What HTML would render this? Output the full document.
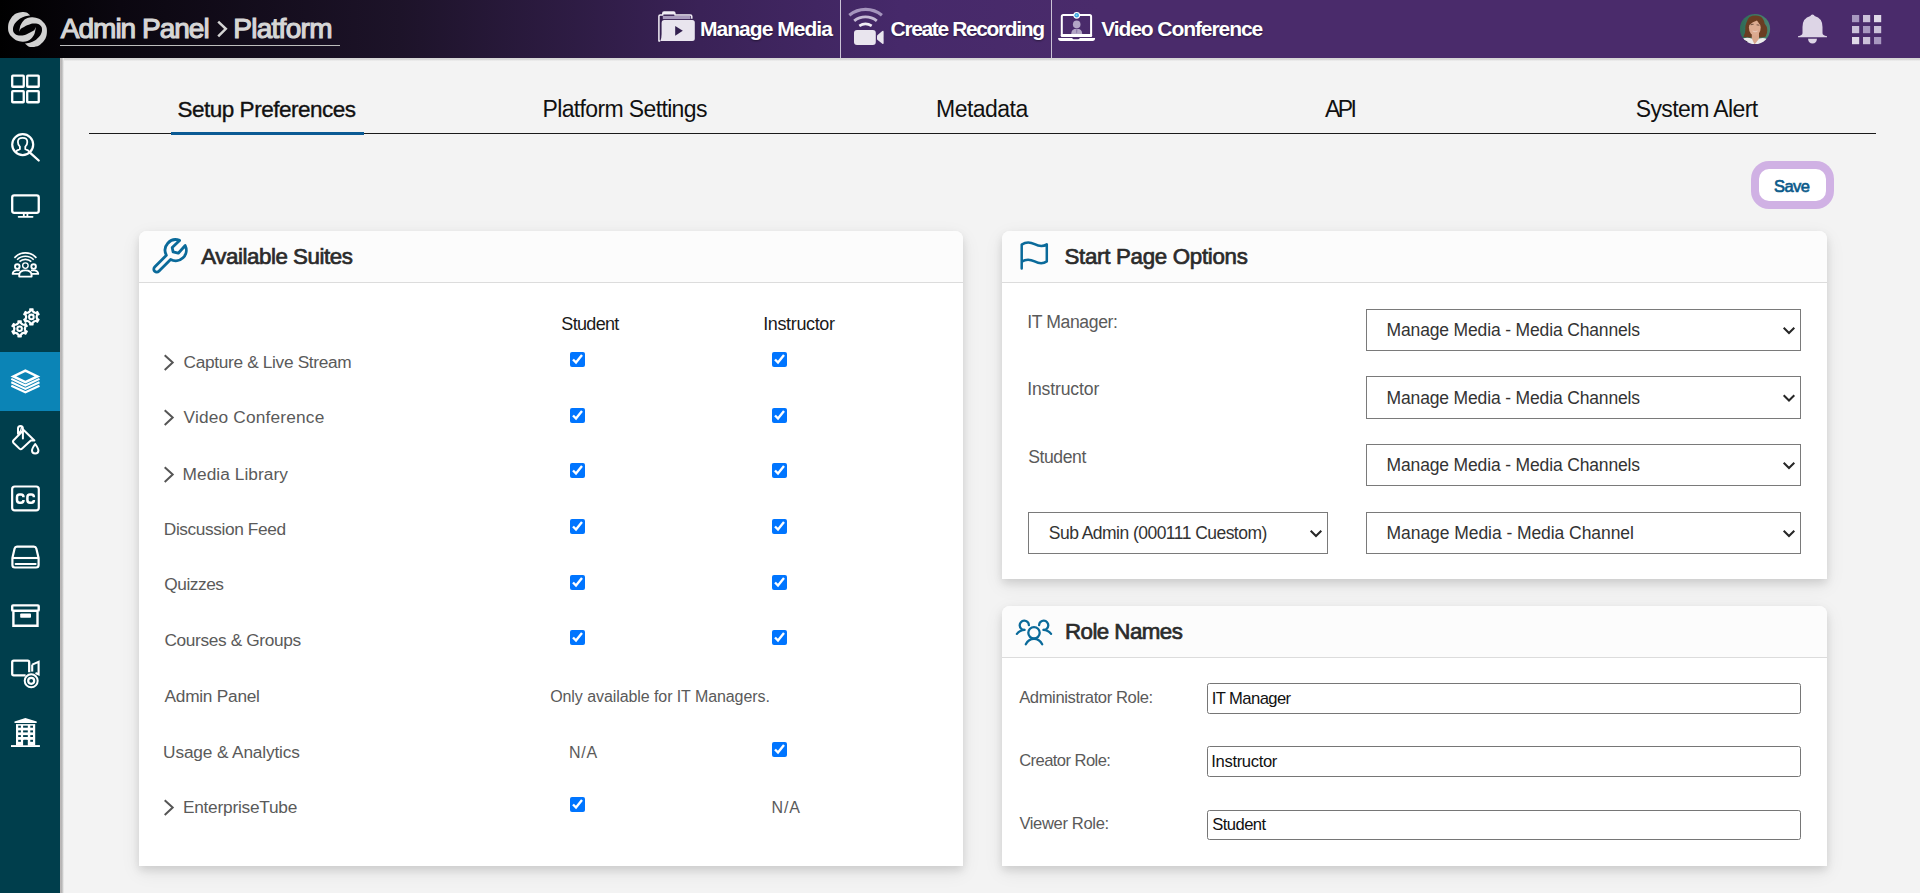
<!DOCTYPE html>
<html lang="en">
<head>
<meta charset="utf-8">
<title>Admin Panel - Platform</title>
<style>
*{box-sizing:border-box;}
html,body{margin:0;padding:0;}
body{width:1920px;height:893px;overflow:hidden;position:relative;background:#f3f3f3;font-family:"Liberation Sans",sans-serif;color:#222;}
.abs{position:absolute;}
.t{position:absolute;white-space:nowrap;line-height:1;}
/* ---------- header ---------- */
#hdr{position:absolute;left:0;top:0;width:1920px;height:58px;background:linear-gradient(90deg,#000 0px,#0b0710 120px,#1d1329 400px,#3a2257 700px,#46296a 900px,#4a2b6b 1100px,#4a2b6b 1920px);}
#hdrshadow{position:absolute;left:60px;top:58px;width:1860px;height:3px;background:linear-gradient(180deg,#d5d5d5 0,#d9d9d9 55%,#f3f3f3 100%);}
#title{left:60px;top:14px;font-size:29.5px;color:#dcdcdc;letter-spacing:-1.7px;-webkit-text-stroke:.5px #dcdcdc;}
#titleline{left:60px;top:45px;width:280px;height:1px;background:#bdbdbd;}
.nav{color:#fff;font-weight:700;font-size:20.4px;letter-spacing:-.6px;text-shadow:0 1px 2px rgba(0,0,0,.45);}
.sep{position:absolute;top:0;width:1px;height:58px;background:#cbc3d6;}
/* ---------- sidebar ---------- */
#side{position:absolute;left:0;top:58px;width:60px;height:835px;background:#003e4c;}
#sideshadow{position:absolute;left:60px;top:58px;width:4px;height:835px;background:linear-gradient(90deg,#bdb9b9 0,#b6b6b6 45%,#f3f3f3 100%);}
#active{position:absolute;left:0;top:352px;width:60px;height:59px;background:#0b84b6;}
.ico{position:absolute;overflow:visible;}
/* ---------- tabs ---------- */
.tab{font-size:23px;color:#111;letter-spacing:-.73px;}
#tabline{left:89px;top:133px;width:1787px;height:1px;background:#1a1a1a;}
#tabactive{left:171px;top:132px;width:193px;height:3px;background:#0a5a94;}
/* ---------- panels ---------- */
.panel{position:absolute;background:#fff;border-radius:8px 8px 0 0;box-shadow:0 4px 8px 0 rgba(0,0,0,.115),0 6px 20px 0 rgba(0,0,0,.075);}
.phead{position:absolute;left:0;top:0;right:0;height:52px;background:#fcfcfc;border-bottom:1px solid #dcdcdc;border-radius:8px 8px 0 0;}
.ptitle{font-size:23px;color:#2a2a2a;letter-spacing:-.7px;-webkit-text-stroke:.35px #2a2a2a;}
.lbl{font-size:17.5px;color:#555;letter-spacing:-.5px;}
.colh{font-size:18px;color:#1a1a1a;letter-spacing:-.6px;}
input[type=checkbox]{position:absolute;margin:0;width:15px;height:15px;}
.sel{position:absolute;border:1px solid #7a7a7a;background:#fff;}
.inp{position:absolute;border:1px solid #767676;border-radius:2.5px;background:#fff;}
</style>
</head>
<body>

<!-- HEADER -->
<div id="hdr"></div>
<div id="hdrshadow"></div>

<svg class="abs" style="left:0;top:0" width="1920" height="58" viewBox="0 0 1920 58">
  <!-- logo -->
  <g fill="#d2d2d2">
    <path d="M30.2 15.4C29.58 14.93 27.80 13.17 26.50 12.60C25.20 12.03 24.15 11.83 22.40 12.00C20.65 12.17 17.87 12.62 16.00 13.60C14.13 14.58 12.43 16.33 11.20 17.90C9.97 19.47 9.12 21.13 8.60 23.00C8.08 24.87 8.03 27.43 8.10 29.10C8.17 30.77 8.48 31.80 9.00 33.00C9.52 34.20 10.03 35.10 11.20 36.30C12.37 37.50 14.13 39.30 16.00 40.20C17.87 41.10 20.48 41.57 22.40 41.70C24.32 41.83 26.02 41.52 27.50 41.00C28.98 40.48 30.12 39.85 31.30 38.60C32.48 37.35 33.85 35.42 34.60 33.50C35.35 31.58 35.60 28.17 35.80 27.10C35.57 27.57 34.87 29.25 34.40 29.90C33.93 30.55 33.63 30.60 33.00 31.00C32.37 31.40 31.57 31.82 30.60 32.30C29.63 32.78 28.57 33.37 27.20 33.90C25.83 34.43 24.13 35.33 22.40 35.50C20.67 35.67 18.27 35.45 16.80 34.90C15.33 34.35 14.23 33.27 13.60 32.20C12.97 31.13 12.97 29.62 13.00 28.50C13.03 27.38 13.35 26.50 13.80 25.50C14.25 24.50 14.65 23.68 15.70 22.50C16.75 21.32 18.52 19.45 20.10 18.40C21.68 17.35 23.52 16.70 25.20 16.20C26.88 15.70 29.37 15.53 30.20 15.40Z"/>
    <path d="M30.2 15.4C29.58 14.93 27.80 13.17 26.50 12.60C25.20 12.03 24.15 11.83 22.40 12.00C20.65 12.17 17.87 12.62 16.00 13.60C14.13 14.58 12.43 16.33 11.20 17.90C9.97 19.47 9.12 21.13 8.60 23.00C8.08 24.87 8.03 27.43 8.10 29.10C8.17 30.77 8.48 31.80 9.00 33.00C9.52 34.20 10.03 35.10 11.20 36.30C12.37 37.50 14.13 39.30 16.00 40.20C17.87 41.10 20.48 41.57 22.40 41.70C24.32 41.83 26.02 41.52 27.50 41.00C28.98 40.48 30.12 39.85 31.30 38.60C32.48 37.35 33.85 35.42 34.60 33.50C35.35 31.58 35.60 28.17 35.80 27.10C35.57 27.57 34.87 29.25 34.40 29.90C33.93 30.55 33.63 30.60 33.00 31.00C32.37 31.40 31.57 31.82 30.60 32.30C29.63 32.78 28.57 33.37 27.20 33.90C25.83 34.43 24.13 35.33 22.40 35.50C20.67 35.67 18.27 35.45 16.80 34.90C15.33 34.35 14.23 33.27 13.60 32.20C12.97 31.13 12.97 29.62 13.00 28.50C13.03 27.38 13.35 26.50 13.80 25.50C14.25 24.50 14.65 23.68 15.70 22.50C16.75 21.32 18.52 19.45 20.10 18.40C21.68 17.35 23.52 16.70 25.20 16.20C26.88 15.70 29.37 15.53 30.20 15.40Z" transform="rotate(180 27.5 29.5)"/>
  </g>
  <!-- folder (Manage Media) -->
  <g>
    <path d="M660.2 41 L658.9 41 L658.9 16.2 Q658.9 14.9 660.2 14.9 L662.8 14.9 L662.8 13.4 Q662.8 12.1 664.1 12.1 L673.6 12.1 Q674.9 12.1 674.9 13.4 L674.9 14.9 L690.3 14.9 Q691.8 14.9 691.8 16.4 L691.8 18.8" fill="none" stroke="#f1eef5" stroke-width="1.5" stroke-linejoin="round"/>
    <rect x="662.8" y="12" width="12.1" height="2.6" rx="1" fill="#f1eef5"/>
    <rect x="662.8" y="15.9" width="27.6" height="3.2" fill="#a99bbd"/>
    <path d="M664.3 20.1 L692.3 20.1 Q694.8 20.1 694.8 22.6 L694.8 38.5 Q694.8 41 692.3 41 L660.4 41 Q661.6 38 661.6 34 L661.6 23 Q661.6 20.1 664.3 20.1Z" fill="#e9e5ee"/>
    <path d="M675.2 25.9 L675.2 35.7 L682.8 30.8Z" fill="#33204f"/>
  </g>
  <!-- camera (Create Recording) -->
  <g fill="none" stroke-linecap="butt">
    <path d="M849.3 15.2 A25.6 25.6 0 0 1 881.9 15.2" stroke="#a595bd" stroke-width="3.1"/>
    <path d="M854.2 20.8 A18.3 18.3 0 0 1 876.8 20.8" stroke="#c5bad5" stroke-width="2.9"/>
    <path d="M859.3 25.9 A11.3 11.3 0 0 1 871.7 25.9" stroke="#f0edf4" stroke-width="2.6"/>
  </g>
  <rect x="854" y="29.9" width="21.8" height="15.1" rx="3" fill="#e9e5ee"/>
  <path d="M877 36.2 Q877 35.4 877.6 34.9 L882.3 31.1 Q883.6 30.2 883.6 31.8 L883.6 43 Q883.6 44.6 882.3 43.7 L877.6 40 Q877 39.5 877 38.8Z" fill="#e9e5ee"/>
  <!-- laptop (Video Conference) -->
  <g>
    <path d="M1061.8 36 L1061.8 16.6 Q1061.8 15.1 1063.3 15.1 L1089.6 15.1 Q1091.1 15.1 1091.1 16.6 L1091.1 36" fill="none" stroke="#fff" stroke-width="2"/>
    <rect x="1060.8" y="34" width="31.3" height="3" rx="1" fill="#fff"/>
    <path d="M1058.1 38 L1072.2 38 Q1072.6 39.2 1074 39.2 L1078 39.2 Q1079.4 39.2 1079.7 38 L1095.1 38 Q1095.1 41 1092.5 41 L1060.7 41 Q1058.1 41 1058.1 38Z" fill="#fff"/>
    <circle cx="1076.7" cy="24.4" r="3.8" fill="#b3a6c6"/>
    <path d="M1071.2 34 Q1071.2 28.7 1076.7 28.7 Q1082.2 28.7 1082.2 34Z" fill="#b3a6c6"/>
    <path d="M1075.9 29.2 L1077.5 29.2 L1077.2 32.8 L1076.7 33.6 L1076.2 32.8Z" fill="#8e7dab"/>
    <circle cx="1076.7" cy="15.3" r="3.4" fill="#fff"/>
    <circle cx="1076.7" cy="15.3" r="2.3" fill="#3ba7e0"/>
    <circle cx="1076.5" cy="15.2" r=".9" fill="#8fd0f0"/>
  </g>
  <!-- avatar -->
  <defs><linearGradient id="avg" x1="0" x2="1" y1="0" y2="0"><stop offset="0" stop-color="#2d6955"/><stop offset="1" stop-color="#4d8571"/></linearGradient><filter id="avb" x="-10%" y="-10%" width="120%" height="120%"><feGaussianBlur stdDeviation=".7"/></filter><clipPath id="av"><circle cx="1755" cy="29" r="15.1"/></clipPath></defs>
  <g clip-path="url(#av)" filter="url(#avb)">
    <rect x="1738" y="12" width="34" height="34" fill="url(#avg)"/>
    <path d="M1749.5 17 Q1755 14.3 1760.5 16.6 Q1764 19 1764.6 23.5 Q1767.6 27 1767.3 30 Q1767.5 33.5 1765.5 36.8 L1761 37.5 L1749 37.5 L1743.3 37 Q1745.5 33 1745.3 30 Q1745 25.5 1746.5 22.5 Q1747.5 18.8 1749.5 17Z" fill="#6a3e22"/>
    <rect x="1751.8" y="32" width="7.2" height="13" fill="#d9a78c"/>
    <ellipse cx="1754.8" cy="27.6" rx="5.9" ry="8.1" fill="#dcab91"/>
    <path d="M1748.6 23.5 Q1749.6 18.2 1755 17.4 Q1761.4 18.2 1762.2 26 Q1758.6 24 1757 20.6 Q1753 21.6 1748.6 25.5Z" fill="#6a3e22"/>
    <path d="M1750.6 24.6 L1753.6 24.3 M1756.6 24.8 L1759.4 25.2" stroke="#7a5a4a" stroke-width="1.1" fill="none"/>
    <path d="M1752.6 31 Q1755 32.6 1757.6 31" stroke="#ecd3c8" stroke-width=".8" fill="none"/>
    <path d="M1742 46 L1743.2 38.3 Q1748 37 1751.8 38.6 L1754.6 44.4 L1759.2 38.6 Q1763 37.5 1766.4 38.7 L1768 46Z" fill="#ececec"/>
    <path d="M1743 39.5 L1747.5 41.5 L1746 44 L1742 43Z" fill="#2b2430"/>
  </g>
  <!-- bell -->
  <path d="M1812.5 14.4 Q1814.3 14.4 1814.6 16 Q1822.5 18 1822.5 27 L1822.5 33 Q1822.5 35.6 1827 36.2 L1827 37.3 L1798 37.3 L1798 36.2 Q1802.5 35.6 1802.5 33 L1802.5 27 Q1802.5 18 1810.4 16 Q1810.7 14.4 1812.5 14.4Z" fill="#ddd5e6"/>
  <path d="M1808 38.7 L1817 38.7 Q1816.5 43.4 1812.5 43.4 Q1808.5 43.4 1808 38.7Z" fill="#ddd5e6"/>
  <!-- app grid -->
  <g>
    <rect x="1852" y="15" width="7.2" height="7.2" fill="#a898c0"/><rect x="1863" y="15" width="7.2" height="7.2" fill="#cbc1d9"/><rect x="1874" y="15" width="7.2" height="7.2" fill="#e0dae8"/>
    <rect x="1852" y="26" width="7.2" height="7.2" fill="#cbc1d9"/><rect x="1863" y="26" width="7.2" height="7.2" fill="#a898c0"/><rect x="1874" y="26" width="7.2" height="7.2" fill="#cbc1d9"/>
    <rect x="1852" y="37" width="7.2" height="7.2" fill="#e0dae8"/><rect x="1863" y="37" width="7.2" height="7.2" fill="#cbc1d9"/><rect x="1874" y="37" width="7.2" height="7.2" fill="#a898c0"/>
  </g>
</svg>
<div id="titleline" class="abs"></div>

<div class="sep" style="left:840px"></div>
<div class="sep" style="left:1051px"></div>

<!-- SIDEBAR -->
<div id="side"></div>
<div id="sideshadow"></div>
<div id="active"></div>


<svg class="abs" style="left:0;top:58px" width="60" height="835" viewBox="0 58 60 835" fill="none" stroke="#fff" stroke-linejoin="round">
  <!-- 1 dashboard -->
  <g stroke-width="2.3" stroke-linejoin="miter">
    <rect x="12.2" y="75.65" width="11.55" height="11.1" rx=".6"/><rect x="27.2" y="75.65" width="11.55" height="11.1" rx=".6"/>
    <rect x="12.2" y="91.05" width="11.55" height="11.2" rx=".6"/><rect x="27.2" y="91.05" width="11.55" height="11.2" rx=".6"/>
  </g>
  <!-- 2 user search -->
  <circle cx="22.7" cy="144.6" r="10.5" stroke-width="2.2"/>
  <path d="M30.2 152.8 L38.7 160.5" stroke-width="2.3" stroke-linecap="round"/>
  <path d="M15.6 152.2 Q16.4 150.4 19.9 149.2 L19.9 146.6 Q17.9 145 17.9 142 Q17.7 137.8 22.6 137.8 Q27.5 137.8 27.3 142 Q27.3 145 25.3 146.6 L25.3 149.2 Q28.8 150.4 29.8 152.2" stroke-width="1.8"/>
  <!-- 3 monitor -->
  <rect x="12.2" y="195.45" width="26.55" height="17.4" rx="2" stroke-width="2.3"/>
  <path d="M23.8 214 L23.8 216.2 M27.4 214 L27.4 216.2" stroke-width="1.8"/>
  <path d="M18.6 216.8 L32.6 216.8" stroke-width="1.7" stroke-linecap="round"/>
  <!-- 4 group broadcast -->
  <g stroke-width="1.6" stroke-linecap="butt">
    <path d="M14.4 257.9 A14.6 14.6 0 0 1 36.4 257.9"/>
    <path d="M17.1 259.8 A11.6 11.6 0 0 1 33.7 259.8"/>
    <path d="M19.5 261.7 A8.6 8.6 0 0 1 31.3 261.7"/>
  </g>
  <g stroke-width="1.9">
    <circle cx="25.4" cy="265.6" r="2.75" stroke-width="1.4"/>
    <circle cx="17.3" cy="266.6" r="2.3"/>
    <circle cx="33.6" cy="266.6" r="2.3"/>
    <path d="M19.2 276.6 L19.2 275 Q19.6 270.4 25.4 270.4 Q31.2 270.4 31.6 275 L31.6 276.6Z"/>
    <path d="M19 273.9 L12.7 273.9 Q12.9 270.9 16.2 270.4 L19.8 270.4"/>
    <path d="M31.8 273.9 L38.2 273.9 Q38 270.9 34.7 270.4 L31 270.4"/>
  </g>
  <!-- 5 gears -->
  <g stroke="none"><g fill="#fff"><rect x="29.15" y="308.30" width="4.5" height="3" rx=".7" transform="rotate(0 31.4 316.9)"/><rect x="29.15" y="308.30" width="4.5" height="3" rx=".7" transform="rotate(60 31.4 316.9)"/><rect x="29.15" y="308.30" width="4.5" height="3" rx=".7" transform="rotate(120 31.4 316.9)"/><rect x="29.15" y="308.30" width="4.5" height="3" rx=".7" transform="rotate(180 31.4 316.9)"/><rect x="29.15" y="308.30" width="4.5" height="3" rx=".7" transform="rotate(240 31.4 316.9)"/><rect x="29.15" y="308.30" width="4.5" height="3" rx=".7" transform="rotate(300 31.4 316.9)"/><circle cx="31.4" cy="316.9" r="6.6"/></g><polygon points="31.40 311.30 33.42 313.39 36.25 314.10 35.45 316.90 36.25 319.70 33.42 320.41 31.40 322.50 29.38 320.41 26.55 319.70 27.35 316.90 26.55 314.10 29.37 313.39" fill="#003e4c"/><circle cx="31.4" cy="316.9" r="3.3" fill="#fff"/><circle cx="31.4" cy="316.9" r="1.25" fill="#003e4c"/><g fill="#fff"><rect x="17.35" y="320.20" width="4.5" height="3" rx=".7" transform="rotate(0 19.6 328.8)"/><rect x="17.35" y="320.20" width="4.5" height="3" rx=".7" transform="rotate(60 19.6 328.8)"/><rect x="17.35" y="320.20" width="4.5" height="3" rx=".7" transform="rotate(120 19.6 328.8)"/><rect x="17.35" y="320.20" width="4.5" height="3" rx=".7" transform="rotate(180 19.6 328.8)"/><rect x="17.35" y="320.20" width="4.5" height="3" rx=".7" transform="rotate(240 19.6 328.8)"/><rect x="17.35" y="320.20" width="4.5" height="3" rx=".7" transform="rotate(300 19.6 328.8)"/><circle cx="19.6" cy="328.8" r="6.6"/></g><polygon points="19.60 323.20 21.62 325.29 24.45 326.00 23.65 328.80 24.45 331.60 21.62 332.31 19.60 334.40 17.58 332.31 14.75 331.60 15.55 328.80 14.75 326.00 17.57 325.29" fill="#003e4c"/><circle cx="19.6" cy="328.8" r="3.3" fill="#fff"/><circle cx="19.6" cy="328.8" r="1.25" fill="#003e4c"/></g>
  <!-- 6 layers (active) -->
  <g stroke-linejoin="miter">
    <path d="M25.4 370.7 L37.4 376.4 L25.4 382.1 L13.4 376.4Z" stroke-width="2.5"/>
    <path d="M11.3 378.9 L25.4 385.5 L39.5 378.9" stroke-width="2.1"/>
    <path d="M11.3 382.3 L25.4 388.9 L39.5 382.3" stroke-width="2.1"/>
    <path d="M11.3 385.7 L25.4 392.3 L39.5 385.7" stroke-width="2.1"/>
  </g>
  <!-- 7 paint bucket -->
  <g stroke-width="2" stroke-linecap="round">
    <path d="M23.6 430 L13.6 440.2 Q12.3 441.6 13.6 443 L19.4 448.6 Q20.8 449.9 22.2 448.6 L30.8 440.5 L34.4 440.5 Z"/>
    <path d="M18 433.8 L18 428.6 Q18 426 20.5 426 Q22.9 426 22.9 428.6 L22.9 438.4"/>
    <path d="M21.4 427.4 Q21.3 430.3 19.2 432.8" stroke-width="1.4"/>
    <path d="M35.2 444 Q38.4 448.4 38.4 450.6 Q38.4 453.6 35.2 453.6 Q32 453.6 32 450.6 Q32 448.4 35.2 444Z"/>
  </g>
  <!-- 8 CC -->
  <rect x="12.15" y="486.5" width="26.65" height="23.8" rx="2.6" stroke-width="2.2"/>
  <g stroke-width="2.5" stroke-linecap="butt" stroke-linejoin="round">
    <path d="M23.5 497.2 Q23.5 494.5 21 494.5 L19.6 494.5 Q17 494.5 17 497.2 L17 500 Q17 502.7 19.6 502.7 L21 502.7 Q23.5 502.7 23.5 500"/>
    <path d="M33.9 497.2 Q33.9 494.5 31.4 494.5 L30 494.5 Q27.4 494.5 27.4 497.2 L27.4 500 Q27.4 502.7 30 502.7 L31.4 502.7 Q33.9 502.7 33.9 500"/>
  </g>
  <!-- 9 drive -->
  <g stroke-width="2.2">
    <path d="M17 546.6 L33.9 546.6 Q35.8 546.6 36.3 548.5 L38.6 558 L38.6 565 Q38.6 567.5 36.1 567.5 L14.9 567.5 Q12.4 567.5 12.4 565 L12.4 558 L14.6 548.5 Q15.1 546.6 17 546.6Z"/>
    <path d="M12.6 558 L38.4 558" stroke-width="2.1"/>
    <path d="M15.6 564 L35.6 564" stroke-width="2" stroke-linecap="round"/>
  </g>
  <!-- 10 archive -->
  <g stroke-width="2.4" stroke-linejoin="miter">
    <rect x="12.2" y="605.4" width="26.5" height="5.4" rx=".8"/>
    <path d="M13.4 612 L13.4 625.7 L37.5 625.7 L37.5 612"/>
  </g>
  <rect x="20.2" y="613.5" width="10.8" height="4.3" rx=".8" fill="#fff" stroke="none"/>
  <!-- 11 camera target -->
  <path d="M25.6 675.3 L13.7 675.3 Q12.2 675.3 12.2 673.8 L12.2 662.2 Q12.2 660.7 13.7 660.7 L27.7 660.7 Q29.2 660.7 29.2 662.2 L29.2 672.2" stroke-width="2.3"/>
  <path d="M32.2 664.6 L38.6 661.8 L38.6 674.4 L35.5 673" stroke-width="2.1" stroke-linejoin="miter"/>
  <path d="M32.2 664.6 L32.2 671.6" stroke-width="2.1"/>
  <circle cx="31.2" cy="680.8" r="6.5" stroke-width="2"/>
  <circle cx="31.2" cy="680.8" r="3" stroke-width="2.2"/>
  <!-- 12 building -->
  <g fill="#fff" stroke="none">
    <path d="M25.4 717.9 L36.7 721.5 L36.7 723.1 L14.5 723.1 L14.5 721.5Z"/>
    <rect x="16" y="724.1" width="19.2" height="21.4"/>
    <rect x="11" y="745.1" width="28.9" height="1.9"/>
  </g>
  <g fill="#003e4c" stroke="none">
    <rect x="18.2" y="725.7" width="2.7" height="2"/><rect x="23.1" y="725.7" width="4.7" height="2"/><rect x="30.3" y="725.7" width="2.7" height="2"/>
    <rect x="18.2" y="730.4" width="2.7" height="2"/><rect x="23.1" y="730.4" width="4.7" height="2"/><rect x="30.3" y="730.4" width="2.7" height="2"/>
    <rect x="18.2" y="735.1" width="2.7" height="1.9"/><rect x="23.1" y="735.1" width="4.7" height="1.9"/><rect x="30.3" y="735.1" width="2.7" height="1.9"/>
    <rect x="18.2" y="739.8" width="2.7" height="2"/><rect x="30.3" y="739.8" width="2.7" height="2"/>
    <path d="M23.1 745.3 L23.1 740.6 Q23.1 739.8 23.9 739.8 L27 739.8 Q27.8 739.8 27.8 740.6 L27.8 745.3Z"/>
  </g>
</svg>

<!-- TABS -->
<div id="tabline" class="abs"></div>
<div id="tabactive" class="abs"></div>


<!-- PANELS -->
<div class="panel" style="left:139px;top:231px;width:824px;height:635px;"><div class="phead"></div></div>
<div class="panel" style="left:1002px;top:231px;width:825px;height:348px;"><div class="phead"></div></div>
<div class="panel" style="left:1002px;top:606px;width:825px;height:260px;"><div class="phead"></div></div>

<!-- save button -->
<div class="abs" style="left:1751px;top:161px;width:83px;height:48px;border-radius:18px;background:#d0b1e4;"></div>
<div class="abs" style="left:1759px;top:169px;width:67px;height:32px;border-radius:10px;background:#fff;"></div>

<!-- panel icons -->
<svg class="abs" style="left:0;top:0" width="1920" height="893" viewBox="0 0 1920 893" fill="none" stroke="#0a6a9a" stroke-linecap="round" stroke-linejoin="round">
  <!-- wrench -->
  <path d="M179.6 240.4 A10.6 10.6 0 0 0 166.4 255.3 L154.66 267.06 A2.95 2.95 0 0 0 158.84 271.24 L170.6 259.5 A10.6 10.6 0 0 0 185.2 245.5 L178.3 253.2 L173.1 251.9 L172.2 247.6 Z" stroke-width="2.8"/>
  <!-- flag -->
  <path d="M1021.7 268.6 L1021.7 244.6 Q1027.6 240.6 1034.6 244.2 Q1041.6 247.8 1046.8 244.4 L1046.8 261.4 Q1041.6 265 1034.6 261.4 Q1027.6 257.8 1021.7 261.6" stroke-width="2.5"/>
  <!-- users -->
  <g stroke-width="2.3">
    <circle cx="1034" cy="632.8" r="5.7"/>
    <path d="M1025.8 644.2 Q1028.6 638.9 1034 638.9 Q1039.4 638.9 1042.2 644.2"/>
    <path d="M1028.9 625.2 A4.6 4.6 0 1 0 1024.6 629.9 Q1020 630 1016.9 633.9"/>
    <path d="M1039.1 625.2 A4.6 4.6 0 1 1 1043.4 629.9 Q1048 630 1051.1 633.9"/>
  </g>
</svg>
<svg class="abs" style="left:0;top:0" width="1920" height="893" viewBox="0 0 1920 893" fill="none" stroke="#555" stroke-width="2" stroke-linejoin="miter"><path d="M164.7 355.20 L172.7 362.60 L164.7 370.00"/><path d="M164.7 410.20 L172.7 417.60 L164.7 425.00"/><path d="M164.7 467.20 L172.7 474.60 L164.7 482.00"/><path d="M164.7 800.20 L172.7 807.60 L164.7 815.00"/></svg>
<svg class="abs" style="left:210px;top:15px" width="24" height="28" viewBox="210 15 24 28" fill="none" stroke="#d4d4d4" stroke-width="2.5"><path d="M218.2 21.6 L225.8 28.8 L218.2 36.4"/></svg>
<input type="checkbox" checked style="left:570px;top:352px"><input type="checkbox" checked style="left:772px;top:352px"><input type="checkbox" checked style="left:570px;top:408px"><input type="checkbox" checked style="left:772px;top:408px"><input type="checkbox" checked style="left:570px;top:463px"><input type="checkbox" checked style="left:772px;top:463px"><input type="checkbox" checked style="left:570px;top:519px"><input type="checkbox" checked style="left:772px;top:519px"><input type="checkbox" checked style="left:570px;top:575px"><input type="checkbox" checked style="left:772px;top:575px"><input type="checkbox" checked style="left:570px;top:630px"><input type="checkbox" checked style="left:772px;top:630px"><input type="checkbox" checked style="left:772px;top:742px"><input type="checkbox" checked style="left:570px;top:797px">
<!-- selects -->
<div class="sel" style="left:1366px;top:309px;width:435px;height:42px"></div>
<div class="sel" style="left:1366px;top:376px;width:435px;height:43px"></div>
<div class="sel" style="left:1366px;top:444px;width:435px;height:42px"></div>
<div class="sel" style="left:1028px;top:512px;width:300px;height:42px"></div>
<div class="sel" style="left:1366px;top:512px;width:435px;height:42px"></div>
<svg class="abs" style="left:0;top:0" width="1920" height="893" viewBox="0 0 1920 893" fill="none" stroke="#262626" stroke-width="2" stroke-linejoin="miter">
<path d="M1783.7 327.7 L1789 333 L1794.3 327.7"/>
<path d="M1783.7 395.2 L1789 400.5 L1794.3 395.2"/>
<path d="M1783.7 462.7 L1789 468 L1794.3 462.7"/>
<path d="M1783.7 530.7 L1789 536 L1794.3 530.7"/>
<path d="M1310.7 530.7 L1316 536 L1321.3 530.7"/>
</svg>
<!-- inputs -->
<div class="inp" style="left:1207px;top:683px;width:594px;height:31px"></div>
<div class="inp" style="left:1207px;top:746px;width:594px;height:31px"></div>
<div class="inp" style="left:1207px;top:810px;width:594px;height:30px"></div>

<!-- TEXT -->
<div class="t" style="left:60.80px;top:15px;font-size:28px;letter-spacing:-0.994px;color:#d6d6d6;-webkit-text-stroke:1.15px #d6d6d6;">Admin Panel</div>
<div class="t" style="left:233.20px;top:15px;font-size:28px;letter-spacing:-0.703px;color:#d6d6d6;-webkit-text-stroke:1.15px #d6d6d6;">Platform</div>
<div class="t" style="left:700.00px;top:18px;font-size:21px;letter-spacing:-0.969px;color:#fff;font-weight:700;text-shadow:0 1px 2px rgba(0,0,0,.45);">Manage Media</div>
<div class="t" style="left:890.60px;top:18px;font-size:21px;letter-spacing:-1.374px;color:#fff;font-weight:700;text-shadow:0 1px 2px rgba(0,0,0,.45);">Create Recording</div>
<div class="t" style="left:1101.20px;top:18px;font-size:21px;letter-spacing:-1.079px;color:#fff;font-weight:700;text-shadow:0 1px 2px rgba(0,0,0,.45);">Video Conference</div>
<div class="t" style="left:177.50px;top:99px;font-size:22.5px;letter-spacing:-0.488px;color:#111;-webkit-text-stroke:.35px #111;">Setup Preferences</div>
<div class="t" style="left:542.50px;top:98px;font-size:23px;letter-spacing:-0.639px;color:#111;">Platform Settings</div>
<div class="t" style="left:936.10px;top:98px;font-size:23px;letter-spacing:-0.544px;color:#111;">Metadata</div>
<div class="t" style="left:1324.90px;top:98px;font-size:23px;letter-spacing:-2.491px;color:#111;">API</div>
<div class="t" style="left:1635.70px;top:98px;font-size:23px;letter-spacing:-0.604px;color:#111;">System Alert</div>
<div class="t" style="left:1774.10px;top:178px;font-size:16.5px;letter-spacing:-0.611px;color:#0a5a8a;-webkit-text-stroke:.65px #0a5a8a;">Save</div>
<div class="t" style="left:201.30px;top:246px;font-size:22.3px;letter-spacing:-0.446px;color:#2b2b2b;-webkit-text-stroke:.7px #2b2b2b;">Available Suites</div>
<div class="t" style="left:1064.50px;top:246px;font-size:22.3px;letter-spacing:-0.297px;color:#2b2b2b;-webkit-text-stroke:.7px #2b2b2b;">Start Page Options</div>
<div class="t" style="left:1065.00px;top:621px;font-size:22.3px;letter-spacing:-0.536px;color:#2b2b2b;-webkit-text-stroke:.7px #2b2b2b;">Role Names</div>
<div class="t" style="left:561.30px;top:315px;font-size:18px;letter-spacing:-0.675px;color:#1a1a1a;">Student</div>
<div class="t" style="left:763.20px;top:315px;font-size:18px;letter-spacing:-0.359px;color:#1a1a1a;">Instructor</div>
<div class="t" style="left:183.50px;top:354px;font-size:17.3px;letter-spacing:-0.331px;color:#5a5a5a;">Capture &amp; Live Stream</div>
<div class="t" style="left:183.50px;top:409px;font-size:17.3px;letter-spacing:0.185px;color:#5a5a5a;">Video Conference</div>
<div class="t" style="left:182.60px;top:466px;font-size:17.3px;letter-spacing:0.054px;color:#5a5a5a;">Media Library</div>
<div class="t" style="left:163.80px;top:521px;font-size:17.3px;letter-spacing:-0.395px;color:#5a5a5a;">Discussion Feed</div>
<div class="t" style="left:164.30px;top:576px;font-size:17.3px;letter-spacing:-0.464px;color:#5a5a5a;">Quizzes</div>
<div class="t" style="left:164.50px;top:632px;font-size:17.3px;letter-spacing:-0.374px;color:#5a5a5a;">Courses &amp; Groups</div>
<div class="t" style="left:164.50px;top:688px;font-size:17.3px;letter-spacing:-0.254px;color:#5a5a5a;">Admin Panel</div>
<div class="t" style="left:163.10px;top:744px;font-size:17.3px;letter-spacing:-0.152px;color:#5a5a5a;">Usage &amp; Analytics</div>
<div class="t" style="left:182.90px;top:799px;font-size:17.3px;letter-spacing:-0.238px;color:#5a5a5a;">EnterpriseTube</div>
<div class="t" style="left:550.20px;top:689px;font-size:16px;letter-spacing:-0.079px;color:#5a5a5a;">Only available for IT Managers.</div>
<div class="t" style="left:568.90px;top:745px;font-size:16px;letter-spacing:0.850px;color:#5a5a5a;">N/A</div>
<div class="t" style="left:771.60px;top:800px;font-size:16px;letter-spacing:0.850px;color:#5a5a5a;">N/A</div>
<div class="t" style="left:1027.20px;top:314px;font-size:17.6px;letter-spacing:-0.376px;color:#5a5a5a;">IT Manager:</div>
<div class="t" style="left:1027.20px;top:381px;font-size:17.6px;letter-spacing:-0.141px;color:#5a5a5a;">Instructor</div>
<div class="t" style="left:1028.20px;top:449px;font-size:17.6px;letter-spacing:-0.427px;color:#5a5a5a;">Student</div>
<div class="t" style="left:1019.20px;top:690px;font-size:16.6px;letter-spacing:-0.394px;color:#5a5a5a;">Administrator Role:</div>
<div class="t" style="left:1019.20px;top:753px;font-size:16.6px;letter-spacing:-0.581px;color:#5a5a5a;">Creator Role:</div>
<div class="t" style="left:1019.40px;top:816px;font-size:16.6px;letter-spacing:-0.369px;color:#5a5a5a;">Viewer Role:</div>
<div class="t" style="left:1386.60px;top:322px;font-size:17.5px;letter-spacing:-0.155px;color:#333;">Manage Media - Media Channels</div>
<div class="t" style="left:1386.60px;top:390px;font-size:17.5px;letter-spacing:-0.155px;color:#333;">Manage Media - Media Channels</div>
<div class="t" style="left:1386.60px;top:457px;font-size:17.5px;letter-spacing:-0.155px;color:#333;">Manage Media - Media Channels</div>
<div class="t" style="left:1048.80px;top:525px;font-size:17.5px;letter-spacing:-0.535px;color:#333;">Sub Admin (000111 Cuestom)</div>
<div class="t" style="left:1386.60px;top:525px;font-size:17.5px;letter-spacing:-0.065px;color:#333;">Manage Media - Media Channel</div>
<div class="t" style="left:1211.80px;top:691px;font-size:16.6px;letter-spacing:-0.580px;color:#111;">IT Manager</div>
<div class="t" style="left:1211.30px;top:754px;font-size:16.6px;letter-spacing:-0.348px;color:#111;">Instructor</div>
<div class="t" style="left:1212.30px;top:817px;font-size:16.6px;letter-spacing:-0.565px;color:#111;">Student</div>
</body>
</html>
